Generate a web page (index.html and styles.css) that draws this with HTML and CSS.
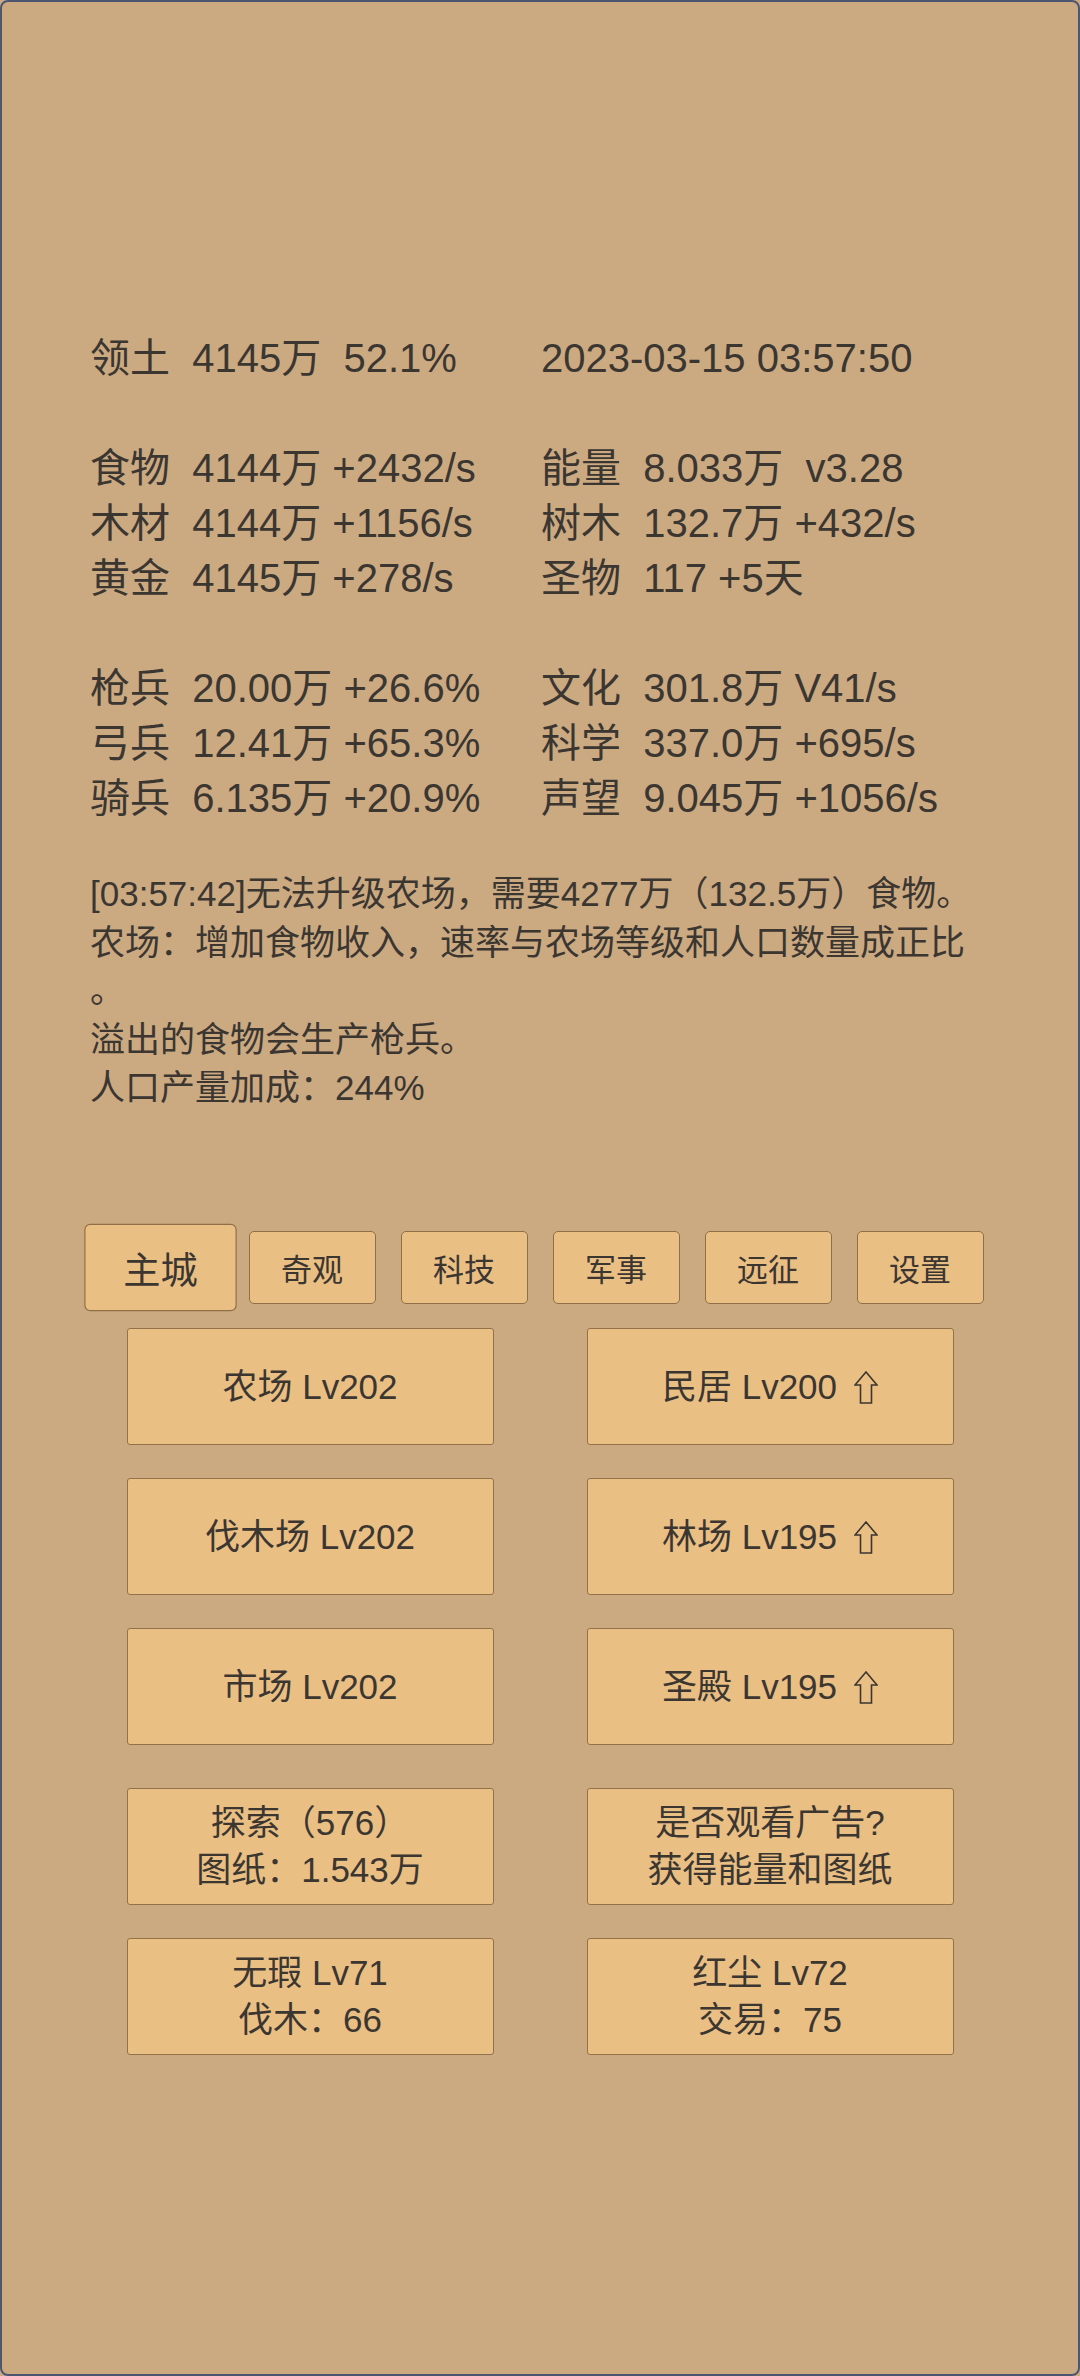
FILE: index.html
```html
<!DOCTYPE html>
<html lang="zh-CN">
<head>
    <meta charset="UTF-8">
    <meta name="viewport" content="width=device-width, initial-scale=1.0">
    <title>主城</title>
    <link rel="stylesheet" href="styles.css">
</head>
<body>
    <div class="screen">
        <!-- 资源面板 -->
        <div class="info">
            <div class="stats">
                <span>领土  4145万  52.1%</span>
                <span>2023-03-15 03:57:50</span>
            </div>
            <div class="stats group">
                <span>食物  4144万 +2432/s</span>
                <span>能量  8.033万  v3.28</span>
                <span>木材  4144万 +1156/s</span>
                <span>树木  132.7万 +432/s</span>
                <span>黄金  4145万 +278/s</span>
                <span>圣物  117 +5天</span>
            </div>
            <div class="stats group">
                <span>枪兵  20.00万 +26.6%</span>
                <span>文化  301.8万 V41/s</span>
                <span>弓兵  12.41万 +65.3%</span>
                <span>科学  337.0万 +695/s</span>
                <span>骑兵  6.135万 +20.9%</span>
                <span>声望  9.045万 +1056/s</span>
            </div>

            <div class="log">
                <p>[03:57:42]无法升级农场，需要4277万（132.5万）食物。</p>
                <p>农场：增加食物收入，速率与农场等级和人口数量成正比。</p>
                <p>溢出的食物会生产枪兵。</p>
                <p>人口产量加成：244%</p>
            </div>
        </div>

        <!-- 标签 -->
        <div class="tabs">
            <button class="tab active">主城</button>
            <button class="tab">奇观</button>
            <button class="tab">科技</button>
            <button class="tab">军事</button>
            <button class="tab">远征</button>
            <button class="tab">设置</button>
        </div>

        <!-- 建筑 -->
        <div class="buildings">
            <button class="building">农场 Lv202</button>
            <button class="building">民居 Lv200<svg class="up" viewBox="0 0 24 33"><path d="M12 1 L1 14 H6.5 V32 H17.5 V14 H23 Z"/></svg></button>
            <button class="building">伐木场 Lv202</button>
            <button class="building">林场 Lv195<svg class="up" viewBox="0 0 24 33"><path d="M12 1 L1 14 H6.5 V32 H17.5 V14 H23 Z"/></svg></button>
            <button class="building">市场 Lv202</button>
            <button class="building">圣殿 Lv195<svg class="up" viewBox="0 0 24 33"><path d="M12 1 L1 14 H6.5 V32 H17.5 V14 H23 Z"/></svg></button>
        </div>

        <div class="buildings extras">
            <button class="building two">探索（576）<br>图纸：1.543万</button>
            <button class="building two">是否观看广告?<br>获得能量和图纸</button>
            <button class="building two">无瑕 Lv71<br>伐木：66</button>
            <button class="building two">红尘 Lv72<br>交易：75</button>
        </div>
    </div>
</body>
</html>
```

FILE: styles.css
```css
body {
    margin: 0;
    font-family: "Liberation Sans", "Noto Sans CJK SC", sans-serif;
    color: #3c3631;
    background-color: #cbaa82;
}
.screen {
    height: 2376px;
    box-sizing: border-box;
    border: 2px solid #4c5672;
    border-radius: 8px;
    background-color: #cbaa82;
    padding-top: 329px;
}
.info {
    padding: 0 90px 0 88px;
}
.stats {
    display: grid;
    grid-template-columns: 451px 1fr;
    font-size: 40px;
    line-height: 55px;
    white-space: pre;
}
.group {
    margin-top: 55px;
}
.log {
    margin-top: 44px;
    font-size: 35px;
    line-height: 48.5px;
    line-break: anywhere;
}
.log p {
    margin: 0;
}
.tabs {
    display: flex;
    justify-content: center;
    gap: 25px;
    margin-top: 118px;
}
.tab {
    width: 127px;
    height: 73px;
    padding: 0;
    font-family: "Liberation Sans", "Noto Sans CJK SC", sans-serif;
    font-size: 31px;
    color: #3c3631;
    background-color: #eabf84;
    border: 1.5px solid #8f6f47;
    border-radius: 5px;
}
.tab.active {
    transform: scale(1.2);
}
.buildings {
    display: grid;
    grid-template-columns: 367px 367px;
    grid-auto-rows: 117px;
    column-gap: 93px;
    row-gap: 33px;
    justify-content: center;
    margin-top: 24px;
}
.extras {
    margin-top: 43px;
}
.building {
    padding: 0;
    font-family: "Liberation Sans", "Noto Sans CJK SC", sans-serif;
    font-size: 35px;
    line-height: 47px;
    color: #3c3631;
    background-color: #eabf84;
    border: 1.5px solid #927249;
    border-radius: 3px;
}
.up {
    width: 24px;
    height: 33px;
    margin-left: 17px;
    vertical-align: -5px;
}
.up path {
    fill: none;
    stroke: #3c3631;
    stroke-width: 1.6;
}
```
